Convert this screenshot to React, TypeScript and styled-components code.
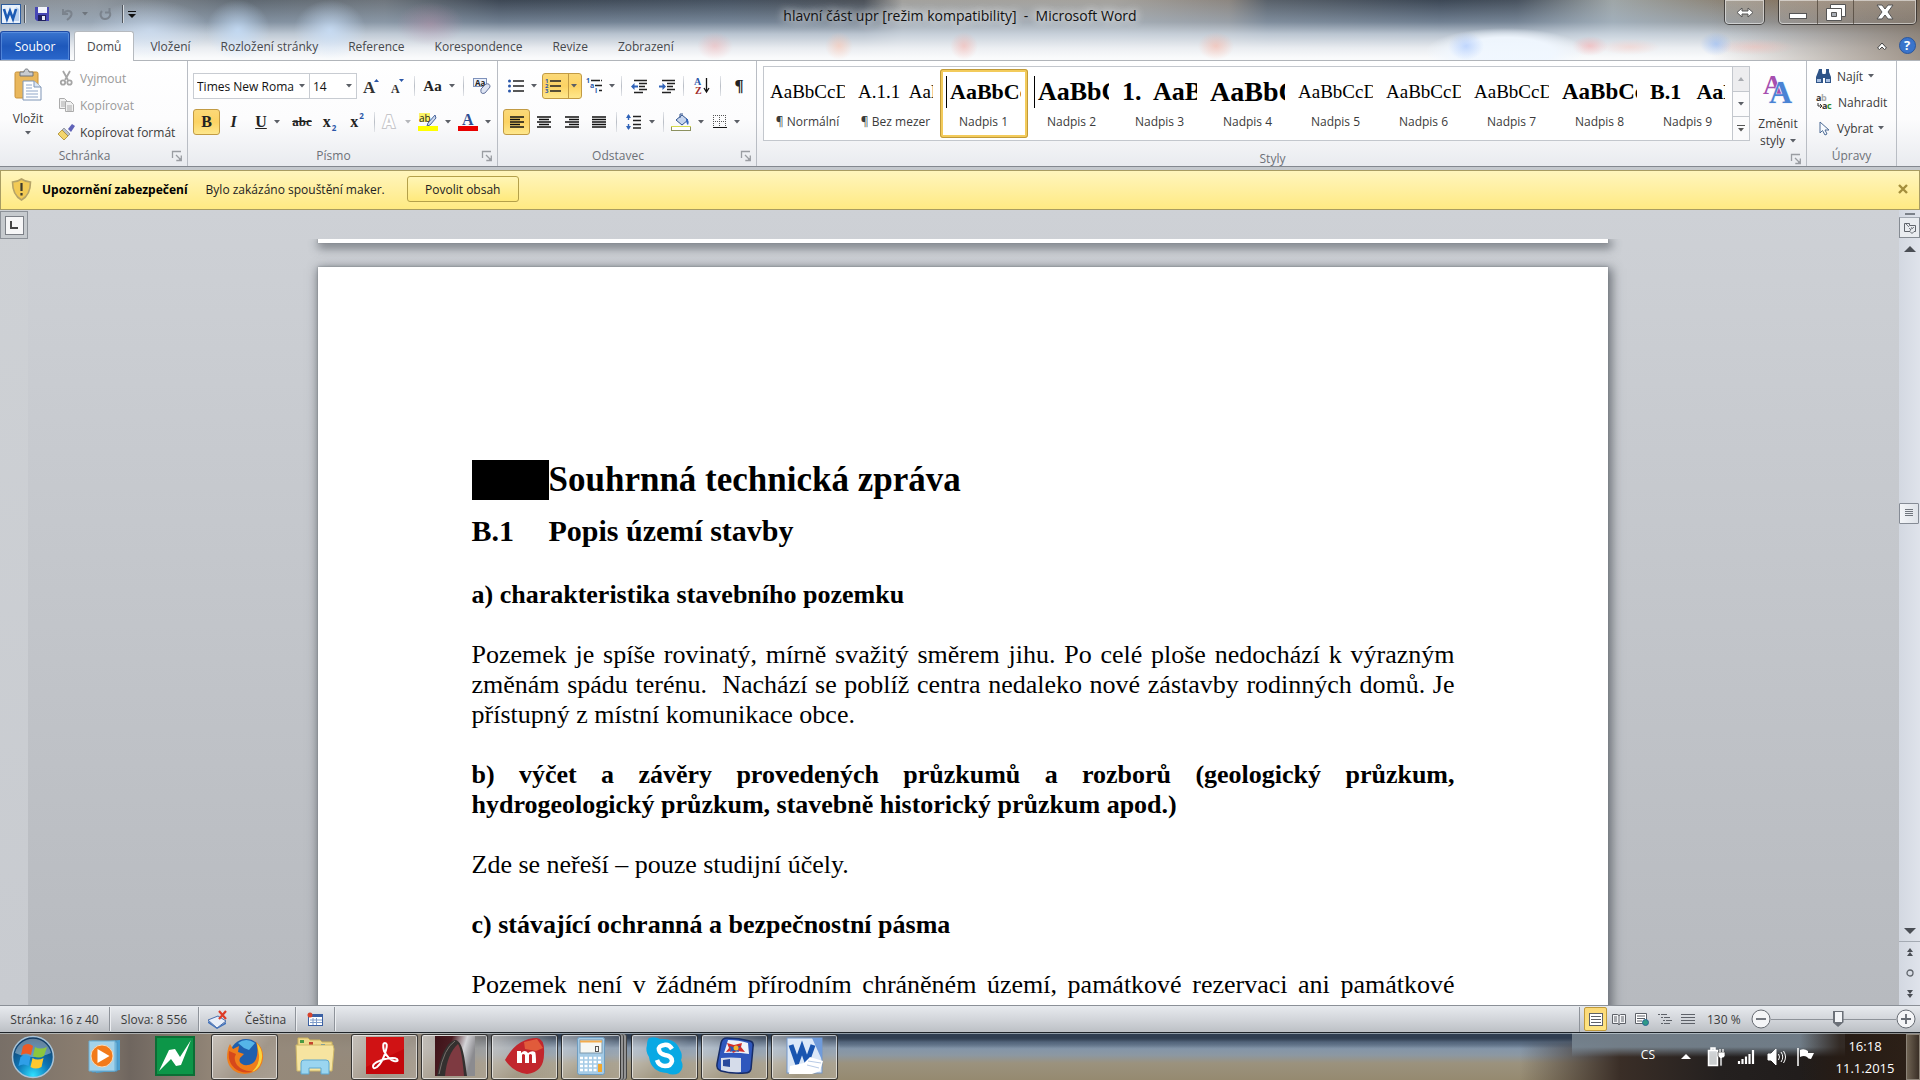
import React from "react";
import styled, { createGlobalStyle, css } from "styled-components";

const ui = `"Open Sans", "Noto Sans", sans-serif`;
const serif = `"Liberation Serif", "Times New Roman", serif`;

const GlobalStyle = createGlobalStyle`
  *, *::before, *::after { box-sizing: border-box; }
  html, body { margin: 0; height: 100%; overflow: hidden; }
  body { font-family: ${ui}; font-size: 12px; color: #3b3b3b; }
  button, select, input { font: inherit; color: inherit; }
  svg { display: block; flex: none; overflow: visible; }
`;

const Desktop = styled.div`
  display: flex;
  flex-direction: column;
  height: 100vh;
  overflow: hidden;
`;

/* ---------- glass title area ---------- */
const Glass = styled.header`
  background:
    radial-gradient(ellipse 60px 30px at 150px 30px, rgba(214, 232, 255, 0.6), transparent),
    radial-gradient(ellipse 32px 30px at 238px 30px, rgba(200, 226, 255, 0.75), transparent),
    radial-gradient(ellipse 36px 30px at 330px 30px, rgba(205, 228, 255, 0.75), transparent),
    radial-gradient(ellipse 34px 22px at 430px 24px, rgba(190, 140, 165, 0.4), transparent),
    radial-gradient(ellipse 18px 14px at 715px 46px, rgba(245, 160, 160, 0.4), transparent),
    radial-gradient(ellipse 14px 14px at 839px 46px, rgba(255, 190, 165, 0.5), transparent),
    radial-gradient(ellipse 14px 14px at 964px 46px, rgba(250, 160, 150, 0.45), transparent),
    radial-gradient(ellipse 18px 14px at 1216px 46px, rgba(250, 170, 150, 0.5), transparent),
    radial-gradient(ellipse 18px 14px at 1466px 46px, rgba(120, 165, 250, 0.4), transparent),
    radial-gradient(ellipse 80px 24px at 1505px 52px, rgba(240, 247, 255, 0.95) 60%, transparent),
    radial-gradient(ellipse 18px 10px at 1590px 46px, rgba(250, 150, 150, 0.45), transparent),
    radial-gradient(ellipse 30px 8px at 1630px 47px, rgba(250, 190, 180, 0.4), transparent),
    radial-gradient(ellipse 16px 12px at 1716px 44px, rgba(130, 175, 250, 0.5), transparent),
    radial-gradient(ellipse 40px 8px at 1755px 47px, rgba(250, 180, 170, 0.4), transparent),
    linear-gradient(90deg, transparent 89%, rgba(120, 104, 88, 0.7) 100%),
    linear-gradient(180deg, rgba(160, 182, 206, 0) 0, rgba(164, 184, 206, 0.5) 22px, rgba(205, 216, 228, 0.85) 34px, rgba(238, 241, 245, 0.97) 48px, #fafbfc 58px),
    linear-gradient(90deg, #8b9198 0, #8d949b 5%, #5f6871 13%, #6f767d 20%, #3d4754 26%, #465260 38%, #4c5158 45%, #a3a19d 47%, #a5a29d 58%, #8c8680 64%, #59616a 66%, #3c4755 75%, #48525e 79%, #9fa6a7 84%, #8b8274 90%, #8a755f 95%, #77654f 100%);
`;
const TitleBar = styled.div`
  display: grid;
  grid-template-columns: 1fr auto 1fr;
  height: 31px;
`;
const QuickAccess = styled.div`
  display: flex;
  align-items: center;
  padding: 0 0 4px 1px;
`;
const QuickButton = styled.button<{ $w: number }>`
  display: grid;
  place-items: center;
  width: ${(p) => p.$w}px;
  height: 24px;
  padding: 0;
  border: 0;
  background: none;
`;
const QuickRule = styled.span`
  width: 2px;
  height: 18px;
  margin: 0 3px;
  border-left: 1px solid #50565e;
  border-right: 1px solid #d6dade;
`;
const WindowTitle = styled.h1`
  margin: 0;
  font-size: 14px;
  line-height: 32px;
  font-weight: 400;
  color: #111;
  text-shadow: 0 0 8px #fff, 0 0 10px rgba(255, 255, 255, 0.8);
`;
const WindowControls = styled.div`
  display: flex;
  justify-content: flex-end;
  gap: 13px;
  padding-right: 3px;
`;
const ControlGroup = styled.div`
  display: flex;
  height: 25px;
  border: 1px solid rgba(45, 42, 40, 0.75);
  border-top: 0;
  border-radius: 0 0 5px 5px;
  box-shadow: inset 0 0 0 1px rgba(255, 255, 255, 0.5);
`;
const ControlButton = styled.button<{ $w: number }>`
  display: grid;
  place-items: center;
  width: ${(p) => p.$w}px;
  padding: 0;
  border: 0;
  background: linear-gradient(rgba(255, 255, 255, 0.25), rgba(255, 255, 255, 0.05));
  & + & { border-left: 1px solid rgba(60, 50, 40, 0.6); }
`;
const Tabs = styled.nav`
  display: flex;
  align-items: flex-end;
  height: 30px;
  padding-right: 4px;
  border-bottom: 1px solid #b1b5ba;
`;
const Tab = styled.button<{ $active?: boolean; $file?: boolean }>`
  height: 29px;
  padding: 2px 15px 0;
  border: 0;
  background: none;
  color: #47494d;
  line-height: 26px;
  white-space: nowrap;
  ${(p) => p.$active && css`
    padding: 0 12px;
    margin: 0 1px -1px 4px;
    height: 30px;
    border: 1px solid #b6babf;
    border-bottom: 0;
    border-radius: 3px 3px 0 0;
    background: #fff;
  `}
  ${(p) => p.$file && css`
    padding: 1px 12px 0;
    width: 70px;
    border: 1px solid #1f4ba5;
    border-bottom: 0;
    border-radius: 3px 3px 0 0;
    background: linear-gradient(#3a75cf, #1e58bb 50%, #2a67cb);
    box-shadow: inset 0 0 0 1px rgba(120, 165, 235, 0.5);
    color: #fff;
  `}
`;
const TabTools = styled.div`
  display: flex;
  align-items: center;
  gap: 6px;
  height: 29px;
  margin-left: auto;
`;

/* ---------- ribbon ---------- */
const Ribbon = styled.section`
  display: flex;
  height: 106px;
  flex: none;
  background: linear-gradient(#fff 0, #fcfcfd 55%, #e9ebef 100%);
  border-bottom: 1px solid #83888f;
`;
const RibbonEnd = styled.div`
  flex: 0 0 23px;
`;
const Group = styled.div<{ $w?: number }>`
  display: flex;
  flex-direction: column;
  ${(p) => (p.$w ? css`flex: 0 0 ${p.$w}px;` : css`flex: 1; min-width: 0;`)}
  border-right: 1px solid #b9bdc4;
`;
const GroupBody = styled.div<{ $pad?: string }>`
  display: flex;
  flex: 1;
  padding: ${(p) => p.$pad || "0"};
`;
const GroupFoot = styled.div`
  display: flex;
  align-items: center;
  height: 20px;
  color: #6d7178;
  line-height: 20px;
`;
const GroupName = styled.span`
  flex: 1;
  text-align: center;
`;
const Launcher = styled.button`
  display: grid;
  place-items: center;
  width: 16px;
  height: 16px;
  margin-right: 2px;
  padding: 0;
  border: 0;
  background: none;
`;
const BigButton = styled.button<{ $w: number }>`
  display: flex;
  flex: none;
  flex-direction: column;
  align-items: center;
  width: ${(p) => p.$w}px;
  padding: 8px 0 0;
  border: 0;
  background: none;
  line-height: 17px;
`;
const BigLabel = styled.span`
  display: block;
  margin-top: 9px;
`;
const BigRow = styled.span`
  display: flex;
  align-items: center;
  gap: 5px;
  min-height: 12px;
`;
const SmallStack = styled.div<{ $gap: number }>`
  display: flex;
  flex-direction: column;
  gap: ${(p) => p.$gap}px;
`;
const SmallButton = styled.button<{ $off?: boolean }>`
  display: flex;
  align-items: center;
  gap: 5px;
  height: 22px;
  padding: 0;
  border: 0;
  background: none;
  white-space: nowrap;
  color: ${(p) => (p.$off ? "#9a9a9a" : "#3b3b3b")};
`;
const ToolRows = styled.div`
  display: flex;
  flex-direction: column;
  gap: 10px;
`;
const ToolRow = styled.div`
  display: flex;
  align-items: center;
  height: 26px;
`;
const Tool = styled.button<{ $w: number; $on?: boolean }>`
  display: flex;
  align-items: center;
  justify-content: center;
  gap: 7px;
  width: ${(p) => p.$w}px;
  height: 26px;
  padding: 0;
  border: 1px solid transparent;
  border-radius: 3px;
  background: none;
  color: #222;
  ${(p) => p.$on && css`
    border-color: #c29b44;
    background: linear-gradient(#fbd978, #fcd364 50%, #fee78c);
  `}
`;
const SplitRight = styled.span`
  display: grid;
  place-items: center;
  width: 12px;
  height: 24px;
  border-left: 1px solid #c29b44;
`;
const ToolRule = styled.span`
  width: 1px;
  height: 20px;
  margin: 0 3px;
  background: linear-gradient(#e4e6ea, #b9bec6, #e4e6ea);
`;
const Glyph = styled.span<{ $size?: number; $bold?: boolean; $italic?: boolean; $line?: string }>`
  font-family: ${serif};
  font-size: ${(p) => p.$size || 16}px;
  line-height: 20px;
  font-weight: ${(p) => (p.$bold ? 700 : 400)};
  font-style: ${(p) => (p.$italic ? "italic" : "normal")};
  text-decoration: ${(p) => p.$line || "none"};
`;
const Mini = styled.span<{ $up?: boolean }>`
  align-self: ${(p) => (p.$up ? "flex-start" : "flex-end")};
  margin-left: -6px;
  color: #2a56a8;
  font-size: 8px;
  line-height: 12px;
  font-weight: 700;
`;
const Combo = styled.label<{ $w: number }>`
  display: flex;
  align-items: center;
  width: ${(p) => p.$w}px;
  height: 26px;
  padding: 0 4px 0 3px;
  border: 1px solid #c8ccd2;
  background: #fff;
  & + & { margin-left: -1px; }
  select {
    flex: 1;
    min-width: 0;
    margin-right: 5px;
    padding: 0;
    border: 0;
    appearance: none;
    background: none;
    color: #111;
    text-overflow: clip;
  }
`;

/* ---------- style gallery ---------- */
const Gallery = styled.div`
  display: flex;
  flex: 1;
  min-width: 0;
  height: 75px;
  border: 1px solid #c3c7cd;
  background: #fff;
`;
const GalleryItems = styled.div`
  display: grid;
  grid-template-columns: repeat(11, 1fr);
  flex: 1;
  min-width: 0;
  padding: 2px 0;
`;
const StyleCard = styled.button<{ $on?: boolean }>`
  display: flex;
  flex-direction: column;
  min-width: 0;
  padding: 0 4px 0 3px;
  border: ${(p) => (p.$on ? "3px solid #f3cb5b" : "3px solid transparent")};
  border-radius: 3px;
  outline: ${(p) => (p.$on ? "1px solid #c09a3a" : "0")};
  outline-offset: -1px;
  background: none;
`;
const Sample = styled.span<{ $size: number; $bold?: boolean; $bar?: boolean }>`
  align-self: stretch;
  height: 32px;
  margin: 4px 0 0;
  overflow: hidden;
  border-left: ${(p) => (p.$bar ? "1px solid #000" : "0")};
  padding-left: ${(p) => (p.$bar ? 3 : 0)}px;
  color: #000;
  font-family: ${serif};
  font-size: ${(p) => p.$size}px;
  line-height: 32px;
  font-weight: ${(p) => (p.$bold ? 700 : 400)};
  text-align: left;
  white-space: pre;
`;
const SampleName = styled.span`
  align-self: center;
  margin-top: 3px;
  line-height: 22px;
  white-space: nowrap;
`;
const GalleryScroll = styled.div`
  display: grid;
  grid-template-rows: repeat(3, 1fr);
  width: 17px;
  border-left: 1px solid #c3c7cd;
`;
const ScrollCell = styled.button<{ $off?: boolean }>`
  display: grid;
  place-items: center;
  padding: 0;
  border: 0;
  background: ${(p) => (p.$off ? "#ededef" : "#fbfbfc")};
  & + & { border-top: 1px solid #c3c7cd; }
`;

/* ---------- message bar ---------- */
const MessageWrap = styled.div`
  padding-top: 3px;
  flex: none;
  background: #c4c8cd;
`;
const MessageBar = styled.div`
  display: flex;
  align-items: center;
  height: 40px;
  padding: 0 11px 2px 10px;
  border: 1px solid #a89c62;
  background: linear-gradient(#fff5bd, #ffea83);
  color: #222;
`;
const MessageTitle = styled.strong`
  margin: 0 18px 0 10px;
  color: #000;
`;
const MessageButton = styled.button`
  width: 112px;
  height: 26px;
  margin: 0 auto 0 22px;
  padding: 0;
  border: 1px solid #b4a04a;
  border-radius: 3px;
  background: linear-gradient(#fff5b6, #ffe97c);
`;
const PlainButton = styled.button`
  display: grid;
  place-items: center;
  padding: 0;
  border: 0;
  background: none;
`;

/* ---------- workspace ---------- */
const Workspace = styled.main`
  display: grid;
  grid-template-columns: 28px 1fr 21px;
  flex: 1;
  min-height: 0;
  background: linear-gradient(#ced1d6, #b7babf);
`;
const VerticalRuler = styled.div`
  padding-top: 1px;
  background: linear-gradient(#ced1d5, #c8cbd0);
`;
const TabSelector = styled.button`
  display: grid;
  place-items: center;
  width: 28px;
  height: 28px;
  padding: 0;
  border: 1px solid #8d9299;
  background: #c6cace;
`;
const TabFace = styled.span`
  display: grid;
  place-items: center;
  width: 19px;
  height: 19px;
  border: 1px solid #7c8087;
  background: #f6f6f7;
`;
const DocumentColumn = styled.div`
  display: flex;
  flex-direction: column;
  min-width: 0;
  min-height: 0;
`;
const RulerSpace = styled.div`
  flex: none;
  height: 29px;
`;
const Pages = styled.div`
  flex: 1;
  min-height: 0;
  padding-right: 2px;
  overflow: hidden;
`;
const Sheet = styled.article<{ $tail?: boolean }>`
  width: 1290px;
  max-width: 90%;
  margin: 0 auto 24px;
  height: ${(p) => (p.$tail ? "4px" : "auto")};
  padding: ${(p) => (p.$tail ? "0" : "193px 153px 0 154px")};
  min-height: ${(p) => (p.$tail ? "0" : "1824px")};
  background: #fff;
  box-shadow: 0 0 2px #777c83, 2px 3px 10px 2px rgba(70, 75, 82, 0.7);
  color: #000;
  font-family: ${serif};
  font-size: 26px;
  line-height: 30px;
`;
const Numbered = styled.div`
  display: grid;
  grid-template-columns: 77px 1fr;
`;
const MainHeading = styled.h2`
  margin: 0 0 14px;
  font-size: 35px;
  line-height: 40px;
`;
const NumberHighlight = styled.span`
  background: #000;
`;
const SubHeading = styled.h3`
  margin: 0 0 32px;
  font-size: 30px;
  line-height: 34px;
`;
const Clause = styled.h4`
  margin: 0 0 30px;
  font-size: 26px;
  line-height: 30px;
  text-align: justify;
`;
const Body = styled.p<{ $continues?: boolean }>`
  margin: 0 0 30px;
  text-align: justify;
  text-align-last: ${(p) => (p.$continues ? "justify" : "auto")};
`;
const ScrollColumn = styled.div`
  display: flex;
  flex-direction: column;
  align-items: stretch;
  background: linear-gradient(90deg, #d3d8e1, #dfe3eb);
`;
const ScrollButton = styled.button<{ $h: number; $boxed?: boolean; $rule?: boolean }>`
  display: grid;
  place-items: center;
  height: ${(p) => p.$h}px;
  padding: 0;
  border: ${(p) => (p.$boxed ? "1px solid #858b93" : "0")};
  border-top: ${(p) => (p.$boxed || p.$rule ? "1px solid #a4aab3" : "0")};
  background: ${(p) => (p.$boxed ? "#e9ecf0" : "none")};
`;
const SplitHandle = styled.span`
  width: 10px;
  height: 2px;
  margin: 3px auto 2px;
  background: #7b8189;
`;
const Track = styled.div`
  display: grid;
  grid-template-rows: 242fr 21px 396fr;
  flex: 1;
`;
const Thumb = styled.span`
  display: grid;
  place-items: center;
  grid-row: 2;
  width: 20px;
  border: 1px solid #858b95;
  border-radius: 1px;
  background: linear-gradient(90deg, #f3f5f8, #dfe3e9);
`;

/* ---------- status bar ---------- */
const StatusBar = styled.footer`
  display: flex;
  align-items: center;
  flex: none;
  height: 27px;
  border-top: 1px solid #8b9097;
  background: linear-gradient(#e7eaee, #d3d6db 50%, #bcc0c5);
`;
const StatusCell = styled.span<{ $w: number }>`
  display: flex;
  align-items: center;
  justify-content: center;
  gap: 17px;
  width: ${(p) => p.$w}px;
  height: 24px;
  border-right: 1px solid #8e939a;
  box-shadow: 1px 0 0 #eceef1;
  white-space: nowrap;
`;
const ViewButtons = styled.div`
  display: flex;
  align-items: center;
  height: 25px;
  margin-left: auto;
  padding-left: 4px;
  border-left: 1px solid #8e939a;
`;
const ViewButton = styled.button<{ $on?: boolean }>`
  display: grid;
  place-items: center;
  width: 23px;
  height: 24px;
  padding: 0;
  border: 1px solid ${(p) => (p.$on ? "#c09a3a" : "transparent")};
  border-radius: 2px;
  background: ${(p) => (p.$on ? "linear-gradient(#fbd978, #fee582)" : "none")};
`;
const ZoomArea = styled.div`
  display: flex;
  align-items: center;
  padding: 0 4px 0 8px;
`;
const ZoomLabel = styled.label`
  width: 44px;
`;
const ZoomSlider = styled.input`
  width: 125px;
  height: 20px;
  margin: 0;
  appearance: none;
  background: linear-gradient(#8d9299, #8d9299) center / 100% 1px no-repeat;
  &::-webkit-slider-thumb {
    appearance: none;
    width: 11px;
    height: 16px;
    background: linear-gradient(#f2f4f7, #f2f4f7) 2px 1px / 7px 10px no-repeat, linear-gradient(#6b7078, #6b7078);
    clip-path: polygon(0 0, 100% 0, 100% 70%, 50% 100%, 0 70%);
  }
`;

/* ---------- taskbar ---------- */
const Taskbar = styled.nav`
  display: flex;
  align-items: center;
  flex: none;
  height: 48px;
  border-top: 1px solid #1e2328;
  box-shadow: inset 0 1px 0 rgba(210, 220, 225, 0.6);
  background:
    linear-gradient(90deg, transparent 1800px, rgba(40, 28, 20, 0.85) 1840px),
    linear-gradient(180deg, rgba(120, 134, 146, 0.9) 0 14px, rgba(120, 134, 146, 0) 24px) 1572px 0 / 273px 100% no-repeat,
    linear-gradient(180deg, #2f3d50 0 5px, rgba(83, 101, 123, 0.6) 9px, rgba(83, 101, 123, 0) 16px) 840px 0 / 732px 100% no-repeat,
    linear-gradient(90deg, transparent 1520px, #3a2e27 1620px, #24201f 1720px, #1f1b1a 1850px, #4a3a2a),
    linear-gradient(90deg, #786f67 0, #8b7e70 90px, #6f665f 130px, #958879 220px, rgba(150, 138, 122, 0.9) 420px, rgba(150, 140, 126, 0) 560px),
    linear-gradient(180deg, #2f3d50 0 5px, #53657b 9px, #8395a9 15px, #8c98a2 22px, #9b927e 30px, #95896f 48px);
`;
const StartButton = styled.button`
  display: grid;
  place-items: center;
  width: 44px;
  height: 46px;
  margin: 0 16px 0 11px;
  padding: 0;
  border: 0;
  background: none;
`;
const Apps = styled.div`
  display: flex;
  gap: 3px;
`;
const AppButton = styled.button<{ $open?: boolean; $stack?: boolean }>`
  display: grid;
  place-items: center;
  width: 67px;
  height: 46px;
  padding: 0 0 2px;
  border: 1px solid transparent;
  border-radius: 3px;
  background: none;
  ${(p) => p.$open && css`
    border-color: rgba(25, 25, 25, 0.8);
    background: linear-gradient(135deg, rgba(255, 255, 255, 0.5), rgba(255, 255, 255, 0.12) 60%, rgba(255, 255, 255, 0.2));
    box-shadow: inset 0 0 0 1px rgba(255, 255, 255, 0.6);
  `}
  ${(p) => p.$stack && css`
    width: 60px;
    margin-right: 7px;
    box-shadow: inset 0 0 0 1px rgba(255, 255, 255, 0.6), 2px 0 0 rgba(225, 225, 225, 0.5), 3px 0 0 #444, 5px 0 0 rgba(225, 225, 225, 0.5), 6px 0 0 #444;
  `}
`;
const Tray = styled.div`
  display: flex;
  align-items: center;
  gap: 8px;
  height: 46px;
  margin-left: auto;
  color: #fff;
`;
const Language = styled.span`
  margin: 0 12px 4px 0;
`;
const TrayButton = styled.button`
  display: grid;
  place-items: center;
  width: 22px;
  height: 24px;
  padding: 0;
  border: 0;
  background: none;
`;
const Clock = styled.time`
  width: 76px;
  margin-left: 2px;
  font-size: 13px;
  line-height: 22px;
  text-align: center;
`;
const ShowDesktop = styled.button`
  width: 14px;
  height: 46px;
  margin-left: -5px;
  padding: 0;
  border: 1px solid #8d8478;
  background: linear-gradient(90deg, #6f6353, #3a2f26);
`;

/* ---------- drawings ---------- */
const Down = ({ c = "#5b5f66" }: { c?: string }) => (
  <svg width="6" height="4" viewBox="0 0 6 4"><path d="M0 0h6L3 3.6z" fill={c} /></svg>
);
const LauncherIcon = () => (
  <svg width="10" height="10" viewBox="0 0 10 10" fill="none" stroke="#9a9da2">
    <path d="M.5 7V.5H9M4 4l5 5M9.300 4.500v5h-5M7 9h2V7" strokeWidth="1.300" />
  </svg>
);
const WordMini = () => (
  <svg width="20" height="20" viewBox="0 0 20 20">
    <rect x=".5" y=".5" width="19" height="19" fill="#e9f1fb" stroke="#2d5c9e" />
    <path d="M15 3l3 2v12h-5z" fill="#b9d0ee" />
    <path d="M3 5l3 10 3-8 3 8 3-10" fill="none" stroke="#1d5bb4" strokeWidth="2.600" />
  </svg>
);
const SaveIcon = () => (
  <svg width="14" height="14" viewBox="0 0 14 14">
    <path d="M0 0h14v14H2l-2-2z" fill="#4747b5" />
    <rect x="3" width="9" height="6" fill="#f2f4fb" /><rect x="3" y="8" width="8" height="6" fill="#20205e" /><rect x="7" y="9" width="3" height="4" fill="#e7e9f6" />
  </svg>
);
const UndoIcon = () => (
  <svg width="13" height="13" viewBox="0 0 13 13" fill="none" stroke="#7b838d" strokeWidth="2">
    <path d="M2 1v5h5M2.500 5.500C6 1 11 3 10.500 6.500 10 9 8 10.500 6 12" />
  </svg>
);
const RedoIcon = () => (
  <svg width="13" height="13" viewBox="0 0 13 13" fill="none" stroke="#7b838d" strokeWidth="2">
    <path d="M3 3C0 6 2 11 6 11s7-4 4-8M6 4.500h4.500V0" />
  </svg>
);
const PasteIcon = () => (
  <svg width="28" height="32" viewBox="0 0 28 32">
    <rect x="1" y="3" width="23" height="26" rx="1.500" fill="#e9b75c" stroke="#c8923a" />
    <path d="M6 3h4c0-4 5-4 5 0h4v4H6z" fill="#c9ccd0" stroke="#70757b" />
    <path d="M9 12h11l7 6v13H9z" fill="#fdfeff" stroke="#7f95b5" />
    <path d="M20 12v6h7" fill="#dbe6f4" stroke="#7f95b5" />
    <path d="M12 16h6M12 19h6M12 22h12M12 25h12M12 28h12" stroke="#8fa6c8" />
  </svg>
);
const CutIcon = () => (
  <svg width="17" height="16" viewBox="0 0 17 16" fill="none" stroke="#a5a5a5" strokeWidth="1.800">
    <path d="M5 1l5 9M12 1L7 10" /><circle cx="5" cy="12.500" r="2.200" /><circle cx="11.500" cy="12.500" r="2.200" />
  </svg>
);
const CopyIcon = () => (
  <svg width="17" height="16" viewBox="0 0 17 16" fill="#f1f1f1" stroke="#ababab">
    <path d="M1.500 1.500h5l3 3v7h-8zM3 5h4M3 7h4M3 9h4" /><path d="M7.500 4.500h5l3 3v7h-8zM9 9h5M9 11h5M9 13h5" />
  </svg>
);
const BrushIcon = () => (
  <svg width="17" height="16" viewBox="0 0 17 16">
    <path d="M10 5l4-5 3 2-4 6z" fill="#5f62b8" /><path d="M6 4l6 6-2 2-6-6z" fill="#b9bfca" stroke="#6d7280" strokeWidth=".6" />
    <path d="M4 6l6 6-4 4-6-6z" fill="#f3d56c" stroke="#a98a2e" strokeWidth=".8" />
  </svg>
);
const EraserIcon = () => (
  <svg width="18" height="17" viewBox="0 0 18 17">
    <rect x=".5" y=".5" width="13" height="8" fill="#eaf0fb" stroke="#7f92bb" />
    <text x="2" y="7.500" fontSize="8" fontFamily="Open Sans" fontWeight="700" fill="#222">Aa</text>
    <path d="M8 11l5-5q4-1 4 3l-5 6q-5 2-4-4z" fill="#dde4f3" stroke="#64739c" />
  </svg>
);
const GrowA = ({ small }: { small?: boolean }) => (
  <svg width="16" height="17" viewBox="0 0 16 17">
    <text x={small ? 1 : 0} y="15" fontSize={small ? 12 : 17} fontFamily="Liberation Serif" fontWeight="700" fill="#333">A</text>
    <path d={small ? "M9 1h5l-2.500 3z" : "M11 4h5l-2.500-3z"} fill="#2a56a8" />
  </svg>
);
const EffectsA = () => (
  <svg width="17" height="18" viewBox="0 0 17 18"><text x="2" y="15" fontSize="17" fontFamily="Open Sans" fontWeight="700" fill="#fff" stroke="#c6c6ca" strokeWidth="2" paintOrder="stroke">A</text></svg>
);
const HighlightIcon = () => (
  <svg width="20" height="18" viewBox="0 0 20 18">
    <rect x="1" width="11" height="9" fill="#fbf267" /><text x="1" y="9" fontSize="10" fontFamily="Open Sans" fill="#222">ab</text>
    <path d="M17 2L10 10l-1 3 3-1 6-7z" fill="#cdd9ee" stroke="#49659c" /><rect y="13" width="20" height="5" fill="#ff0" />
  </svg>
);
const FontColor = () => (
  <svg width="20" height="18" viewBox="0 0 20 18">
    <text x="4" y="12" fontSize="16" fontFamily="Liberation Serif" fontWeight="700" fill="#2f4f93">A</text><rect y="13" width="20" height="5" fill="#e80000" />
  </svg>
);
const ListIcon = ({ kind }: { kind: "dot" | "num" | "multi" }) => (
  <svg width="16" height="16" viewBox="0 0 16 16">
    {kind === "multi" ? (
      <><path d="M5 2.500h11M9 7.500h7M13 12.500h3" stroke="#222" strokeWidth="1.400" strokeDasharray="9 1" />
        <g fontSize="7" fontFamily="Open Sans" fontWeight="700" fill="#2a56a8"><text x="0" y="5">1</text><text x="4" y="10">a</text><text x="9" y="15">i</text></g></>
    ) : (
      <><path d="M5 3h11M5 8h11M5 13h11" stroke="#222" strokeWidth="1.400" />
        {kind === "dot" ? <g fill="#2a56a8"><circle cx="1.500" cy="3" r="1.500" /><circle cx="1.500" cy="8" r="1.500" /><circle cx="1.500" cy="13" r="1.500" /></g>
          : <g fontSize="6" fontFamily="Open Sans" fontWeight="700" fill="#2a56a8"><text x="0" y="5">1</text><text x="0" y="10">2</text><text x="0" y="15">3</text></g>}</>
    )}
  </svg>
);
const IndentIcon = ({ right }: { right?: boolean }) => (
  <svg width="16" height="15" viewBox="0 0 16 15">
    <path d="M3 1.500h13M8 4.500h8M8 7.500h6M8 10.500h8M3 13.500h9" stroke="#222" strokeWidth="1.400" />
    <path d={right ? "M7 7.500L3.500 4v2.500H0v2h3.500V11z" : "M0 7.500L3.500 4v2.500H7v2H3.500V11z"} fill="#2f62b8" />
  </svg>
);
const SortIcon = () => (
  <svg width="16" height="18" viewBox="0 0 16 18">
    <g fontSize="10" fontFamily="Liberation Serif" fontWeight="700"><text x="0" y="8" fill="#2a56a8">A</text><text x="1" y="17" fill="#a12b2b">Z</text></g>
    <path d="M12.500 1v13M10 11l2.500 4 2.500-4" fill="none" stroke="#111" strokeWidth="1.300" />
  </svg>
);
const AlignIcon = ({ kind, c = "#111" }: { kind: "l" | "c" | "r" | "j"; c?: string }) => {
  const short = { l: "M0 %h10", c: "M2 %h10", r: "M4 %h10", j: "M0 %h14" }[kind];
  const d = [0, 1, 2, 3, 4].map((i) => (i % 2 ? short.replace("%", String(i * 2.5 + 1)) : `M0 ${i * 2.5 + 1}h14`)).join("");
  return <svg width="14" height="13" viewBox="0 0 14 13"><path d={d} stroke={c} strokeWidth="1.300" /></svg>;
};
const SpacingIcon = () => (
  <svg width="16" height="16" viewBox="0 0 16 16">
    <path d="M7 2.500h8M7 6.500h8M7 10.500h8M7 14h8" stroke="#222" strokeWidth="1.400" />
    <path d="M2.500 1v14" stroke="#2f62b8" strokeDasharray="5 4" strokeWidth="1.400" /><path d="M0 4l2.500-4L5 4zM0 12l2.500 4L5 12z" fill="#2f62b8" />
  </svg>
);
const BucketIcon = () => (
  <svg width="20" height="18" viewBox="0 0 20 18">
    <path d="M5 7l6-5 6 5-6 5z" fill="#c6d5ee" stroke="#33558f" /><path d="M9 5V1h3" fill="none" stroke="#33558f" /><path d="M15 5q4 3 2 7-2-1-2-7z" fill="#3668be" />
    <rect x=".5" y="13.500" width="19" height="4" fill="#fff" stroke="#8c9160" /><path d="M0 13.500h20" stroke="#d6dc4e" />
  </svg>
);
const BordersIcon = () => (
  <svg width="14" height="14" viewBox="0 0 14 14" fill="none" stroke="#555"><path d="M.5 0v14M6.500 0v14M12.500 0v14M0 .5h14M0 6.500h14" strokeDasharray="1 1" /><path d="M0 12.500h14" stroke="#111" /></svg>
);
const ChangeStyles = () => (
  <svg width="30" height="32" viewBox="0 0 30 32">
    <text x="0" y="20" fontSize="27" fontFamily="Liberation Serif" fontWeight="700" fill="#a64fb0">A</text>
    <text x="6" y="29" fontSize="32" fontFamily="Liberation Serif" fontWeight="700" fill="#4a83d4" stroke="#e8effa" strokeWidth="1" paintOrder="stroke">A</text>
  </svg>
);
const FindIcon = () => (
  <svg width="16" height="14" viewBox="0 0 16 14" fill="#2f5488"><path d="M3 0h3v3l1 4v7H0V8l2-5zM10 0h3v3l2 5v6H9V7l1-4zM6 5h4v4H6z" /><path d="M1 10h4v3H1zM10 10h4v3h-4z" fill="#a9c0e2" /></svg>
);
const ReplaceIcon = () => (
  <svg width="17" height="16" viewBox="0 0 17 16" fontFamily="Open Sans" fontWeight="700" fontSize="9">
    <text x="0" y="7" fill="#333">a</text><text x="5" y="7" fill="#a9a9a9">b</text><text x="6" y="15" fill="#333">a</text><text x="11" y="15" fill="#2a8a2a">c</text>
    <path d="M2 9v3h3M4 10l2 2-2 2" fill="none" stroke="#333" />
  </svg>
);
const CursorIcon = () => (
  <svg width="16" height="15" viewBox="0 0 16 15"><path d="M4 1v11l2.500-2.500L9 14l2-1-2-4h4z" fill="#f8fbff" stroke="#4c6a94" /></svg>
);
const ShieldIcon = () => (
  <svg width="21" height="23" viewBox="0 0 21 23"><path d="M10.500 1q4 3 9 3 0 13-9 18-9-5-9-18 5 0 9-3z" fill="#f2ca55" stroke="#b5a368" strokeWidth="1.600" /><path d="M10.500 5v8M10.500 15v2.500" stroke="#3d3a2e" strokeWidth="2.200" /></svg>
);
const CloseX = ({ c, s = 10 }: { c: string; s?: number }) => (
  <svg width={s} height={s} viewBox="0 0 10 10"><path d="M1 1l8 8M9 1L1 9" stroke={c} strokeWidth="2.400" /></svg>
);
const ReadView = ({ kind }: { kind: number }) => (
  <svg width="14" height="13" viewBox="0 0 14 13" fill="none" stroke="#5d6168">
    {kind === 0 && <><rect x=".5" y=".5" width="13" height="12" fill="#fff" /><path d="M2 3.500h10M2 6.500h10M2 9.500h10" /></>}
    {kind === 1 && <><path d="M.5 1.500h5l1.500 1 1.500-1h5v9H8L7 12l-1-1.500H.5zM7 2v10" fill="#f3f4f6" /><path d="M2 4h3M2 6h3M2 8h3M9 4h3M9 6h3M9 8h3" /></>}
    {kind === 2 && <><path d="M.5.500h11v10H.5z" fill="#fff" /><path d="M2 3h8M2 5.500h8M2 8h5" /><circle cx="10.500" cy="9.500" r="3" fill="#2e9a86" stroke="#2a6594" /></>}
    {kind === 3 && <path d="M0 1.500h2M3 1.500h6M3 4.500h2M6 4.500h6M5 7.500h2M8 7.500h6M3 10.500h2M6 10.500h6" />}
    {kind === 4 && <path d="M0 1.500h14M0 4.500h14M0 7.500h14M0 10.500h14" strokeWidth="1.200" />}
  </svg>
);
const ZoomRound = ({ plus }: { plus?: boolean }) => (
  <svg width="20" height="20" viewBox="0 0 20 20" fill="none" stroke="#666b72"><circle cx="10" cy="10" r="9" fill="#f4f5f7" /><path d={plus ? "M5 10h10M10 5v10" : "M5 10h10"} strokeWidth="1.800" /></svg>
);
const ProofIcon = () => (
  <svg width="20" height="19" viewBox="0 0 20 19"><path d="M0 10l10-4 8 5-9 7z" fill="#e8eef8" stroke="#496fae" /><path d="M0 11l9 7 9-6v2l-9 5-9-6z" fill="#3f70bb" /><path d="M11 1l7 8M18 1l-7 8" stroke="#dd3b26" strokeWidth="2.200" /></svg>
);
const MacroIcon = () => (
  <svg width="16" height="14" viewBox="0 0 16 14"><rect x="1.500" y="2.500" width="14" height="11" fill="#fff" stroke="#3b60a3" /><path d="M2 4h13" stroke="#3b60a3" strokeWidth="2" /><path d="M3 8h12M3 10.500h12M6 6v7M9.500 6v7" stroke="#7f9cca" /><circle cx="3" cy="3" r="2.500" fill="#d8432c" /></svg>
);

const StartOrb = () => (
  <svg width="44" height="44" viewBox="0 0 44 44">
    <defs><radialGradient id="orb" cx=".5" cy=".95" r=".9"><stop offset="0" stopColor="#2fe0ff" /><stop offset=".45" stopColor="#0e76b6" /><stop offset="1" stopColor="#123a62" /></radialGradient></defs>
    <circle cx="22" cy="22" r="20.500" fill="url(#orb)" stroke="#a9c4d8" strokeWidth="1.500" />
    <path d="M4 18a18.500 18.500 0 0 1 36 0q-18 8-36 0z" fill="#fff" opacity=".35" />
    <path d="M12 11q5-4 10 0l-2 9q-5-3-10 0z" fill="#ee5a24" /><path d="M24 12q5 3 12 0l-3 9q-5 3-11 0z" fill="#8cc63f" />
    <path d="M9.500 22q5-4 10 0l-2 9q-5-3-10 0z" fill="#2f9fe8" /><path d="M21.500 23q5 3 11 0l-2 9q-6 3-11 0z" fill="#fdc82f" />
  </svg>
);
const apps: { name: string; open?: boolean; stack?: boolean; icon: React.ReactNode }[] = [
  { name: "Windows Media Player", icon: <svg width="34" height="36" viewBox="0 0 34 36"><path d="M8 4l24-2v30l-24 3z" fill="#4d9fd0" /><path d="M4 3l25 1v29l-25 1z" fill="#7cc0e4" stroke="#4a94c2" /><path d="M1 3h26v30H1z" fill="#a3d2ea" stroke="#6badd2" /><circle cx="14" cy="18" r="11" fill="#f27a1a" stroke="#f9d9b5" /><path d="M9.500 11v14l12-7z" fill="#fff" /></svg> },
  { name: "Blesk", icon: <svg width="40" height="40" viewBox="0 0 40 40"><rect x="1" y="1" width="38" height="38" fill="#0c9648" stroke="#0b6e35" strokeWidth="2" /><path d="M36 4L26 29l-5 1-5-7L4 35 14 14l6-1 5 8z" fill="#fff" /></svg> },
  { name: "Firefox", open: true, icon: <svg width="38" height="38" viewBox="0 0 38 38"><circle cx="20" cy="18" r="16" fill="#1f5fae" /><path d="M12 6q8-6 17 0l-6 7-5-2z" fill="#55b5e8" /><path d="M30 5q8 6 7 17-2 14-18 15Q3 36 1 21 1 12 4 7l3 5 6-3-1 6 6 2-4 4q-2 5 4 7 9 1 12-6 3-8 0-17z" fill="#ef7d1b" /><path d="M31 6q6 7 5 15-1 10-10 14 8-8 7-17z" fill="#fbd33c" /><path d="M3 14q-2 14 10 20 8 3 14 0-10 1-16-6-4-6-1-11z" fill="#d6481b" /></svg> },
  { name: "Průzkumník", icon: <svg width="40" height="38" viewBox="0 0 40 38"><path d="M3 1h10l2 2h10l2 2h10v10H3z" fill="#efd98c" stroke="#cbb25f" /><rect x="5" y="3" width="4" height="3" fill="#4a9a42" /><rect x="14" y="5" width="4" height="3" fill="#c4432f" /><rect x="26" y="7" width="4" height="3" fill="#3d86c2" /><path d="M1 8h37l1 4-2 22H2z" fill="#f6e4a0" stroke="#cfb868" /><path d="M6 37V26q0-3 3-3h22q3 0 3 3v11h-8v-6H14v6z" fill="#9ad5f0" stroke="#5fa8d0" /></svg> },
  { name: "Adobe Reader", open: true, icon: <svg width="38" height="37" viewBox="0 0 38 37"><rect width="38" height="37" fill="#c4070b" /><path d="M0 0h38v12L0 30z" fill="#d91a1a" opacity=".6" /><path d="M7 29q1-4 12-7 9-2 12 0 2 3-3 2-6-2-10-10-2-8 1-8t1 7q-3 12-9 17-4 3-4-1z" fill="none" stroke="#fff" strokeWidth="2" /></svg> },
  { name: "ArchiCAD", open: true, icon: <svg width="40" height="40" viewBox="0 0 40 40"><defs><linearGradient id="ac" y2=".3"><stop offset="0" stopColor="#3d1218" /><stop offset=".4" stopColor="#4a1c22" /><stop offset=".75" stopColor="#d4d4d8" /><stop offset="1" stopColor="#8b8b8f" /></linearGradient></defs><rect width="40" height="40" fill="url(#ac)" /><path d="M2 40Q7 8 20 4q7 0 10 22l2 14z" fill="#34302f" /><path d="M10 40Q12 18 23 8q4 6 6 32z" fill="#7e3a41" /><path d="M4 38Q9 12 20 5" fill="none" stroke="#77706c" /></svg> },
  { name: "Miro", open: true, icon: <svg width="42" height="38" viewBox="0 0 42 38"><path d="M1 23Q13 1 33 1q8 1 7 16 0 18-17 20Q9 35 1 23z" fill="#c2262d" /><path d="M20 5l13-3 6 9-7 3-11-2z" fill="#e8693f" opacity=".8" /><path d="M13 26V14h4v2q4-4 7 0 4-3 7-1 1 1 1 11h-4v-8q-2-2-3 0v8h-4v-8q-2-2-3 0v8z" fill="#fff" /></svg> },
  { name: "Kalkulačka", open: true, stack: true, icon: <svg width="28" height="38" viewBox="0 0 28 38"><rect x=".5" y=".5" width="27" height="37" rx="2" fill="#a5cbe6" stroke="#6d9cc0" /><rect x="3" y="3" width="22" height="13" fill="#f5f7f4" stroke="#7d98ab" /><path d="M3 4.500h22" stroke="#f3ac4e" strokeWidth="2" /><rect x="18.500" y="9.500" width="3" height="5" fill="none" stroke="#555" /><path d="M3 21h22M3 25h22M3 29h17M3 33h17" stroke="#fff" strokeWidth="2.400" strokeDasharray="3 1.500" /><rect x="21" y="27" width="4" height="8" fill="#f2a72e" /></svg> },
  { name: "Skype", open: true, icon: <svg width="38" height="38" viewBox="0 0 38 38"><path d="M3 1q6-2 11 1 16-1 20 11 3 5 1 10 4 8-2 13-6 3-12 0Q5 35 3 20-1 14 1 8q0-5 2-7z" fill="#08a9e4" /><path d="M26 12q-3-5-8-4-6 1-5 5 1 4 6 5 7 1 7 6-1 5-7 5-6 0-8-6" fill="none" stroke="#fff" strokeWidth="4.500" /></svg> },
  { name: "Správce souborů", open: true, icon: <svg width="38" height="38" viewBox="0 0 38 38"><path d="M11 1q12 0 23 3 4 1 3 6l-2 22q-1 4-6 4-12 1-24-2-5-2-4-7L5 6q1-5 6-5z" fill="#2f57bd" stroke="#172c66" strokeWidth="1.500" /><path d="M12 3q11 0 20 3l1 11q-12-2-25-1z" fill="#eef2f8" /><path d="M11 6l7 2 8-2-1 4 4 5-8-1-4 2-1-2-6 1 3-4z" fill="#d22e2a" /><path d="M13 9l5 1 7-1-3 3 1 3-5-1-4 1 1-3z" fill="#2b58b0" /><circle cx="20" cy="11" r="2.500" fill="#f3b52c" /><path d="M5 21q10-1 20 0v14q-10 1-20-2z" fill="#d5dcea" /><path d="M7 23l7-1v8l-7-1z" fill="#28489b" /></svg> },
  { name: "Microsoft Word", open: true, icon: <svg width="38" height="38" viewBox="0 0 38 38"><rect x="1" y="1" width="35" height="35" fill="#dbe8f8" stroke="#7296c9" /><path d="M26 1h10v22z" fill="#6f9bdb" /><path d="M5 8l6 17 5-14 5 14 6-17" fill="none" stroke="#1955b0" strokeWidth="5" /><path d="M4 29l14-3 6-6 13 4-3 10-8 3H3z" fill="#fff" /><path d="M22 24l13 2M21 28l12 3" stroke="#b8cbe6" /></svg> },
];

const samples: { name: string; text: string; size: number; bold?: boolean; bar?: boolean }[] = [
  { name: "¶ Normální", text: "AaBbCcDd", size: 19 },
  { name: "¶ Bez mezer", text: "A.1.1  AaBb", size: 19 },
  { name: "Nadpis 1", text: "AaBbCc", size: 22, bold: true, bar: true },
  { name: "Nadpis 2", text: "AaBbCc", size: 26, bold: true, bar: true },
  { name: "Nadpis 3", text: "1.  AaBb", size: 26, bold: true },
  { name: "Nadpis 4", text: "AaBbCc", size: 28, bold: true },
  { name: "Nadpis 5", text: "AaBbCcDd", size: 19 },
  { name: "Nadpis 6", text: "AaBbCcDd", size: 19 },
  { name: "Nadpis 7", text: "AaBbCcDd", size: 19 },
  { name: "Nadpis 8", text: "AaBbCc", size: 23, bold: true },
  { name: "Nadpis 9", text: "B.1   AaBb", size: 22, bold: true },
];
const tabs = ["Vložení", "Rozložení stránky", "Reference", "Korespondence", "Revize", "Zobrazení"];

const Foot = ({ label, launcher = true }: { label: string; launcher?: boolean }) => (
  <GroupFoot><GroupName>{label}</GroupName>{launcher && <Launcher aria-label={`${label} – další`}><LauncherIcon /></Launcher>}</GroupFoot>
);

export default function App() {
  return (
    <Desktop>
      <GlobalStyle />
      <Glass>
        <TitleBar>
          <QuickAccess>
            <QuickButton $w={20} aria-label="Word"><WordMini /></QuickButton>
            <QuickRule />
            <QuickButton $w={26} aria-label="Uložit"><SaveIcon /></QuickButton>
            <QuickButton $w={24} aria-label="Zpět"><UndoIcon /></QuickButton>
            <QuickButton $w={12} aria-label="Historie"><Down c="#6e757d" /></QuickButton>
            <QuickButton $w={28} aria-label="Znovu"><RedoIcon /></QuickButton>
            <QuickRule />
            <QuickButton $w={10} aria-label="Přizpůsobit">
              <svg width="8" height="7" viewBox="0 0 8 7"><path d="M0 .5h8" stroke="#111" /><path d="M0 3h8L4 7z" fill="#111" /></svg>
            </QuickButton>
          </QuickAccess>
          <WindowTitle>hlavní část upr [režim kompatibility]&nbsp; -&nbsp; Microsoft Word</WindowTitle>
          <WindowControls>
            <ControlGroup>
              <ControlButton $w={39} aria-label="Přepnout">
                <svg width="16" height="11" viewBox="0 0 16 11"><path d="M0 5.500L5 1v3h6V1l5 4.500L11 10V7H5v3z" fill="#fff" stroke="#555" /></svg>
              </ControlButton>
            </ControlGroup>
            <ControlGroup>
              <ControlButton $w={38} aria-label="Minimalizovat">
                <svg width="18" height="14" viewBox="0 0 18 14"><rect x=".5" y="8.500" width="17" height="5" fill="#fff" stroke="#555" /></svg>
              </ControlButton>
              <ControlButton $w={36} aria-label="Obnovit">
                <svg width="20" height="17" viewBox="0 0 20 17"><path d="M4.500.500h15v12h-15z" fill="#fff" stroke="#555" /><path d="M.5 4.500h15v12H.5z" fill="#fff" stroke="#555" /><path d="M5.500 8.500h5v4h-5z" fill="#a9aeb5" stroke="#555" /></svg>
              </ControlButton>
              <ControlButton $w={63} aria-label="Zavřít">
                <svg width="18" height="16" viewBox="0 0 18 16"><path d="M1 1h5l3 4 3-4h5l-5 7 5 7h-5l-3-4-3 4H1l5-7z" fill="#fff" stroke="#555" /></svg>
              </ControlButton>
            </ControlGroup>
          </WindowControls>
        </TitleBar>
        <Tabs>
          <Tab $file>Soubor</Tab>
          <Tab $active>Domů</Tab>
          {tabs.map((t) => <Tab key={t}>{t}</Tab>)}
          <TabTools>
            <PlainButton aria-label="Sbalit pás karet"><svg width="22" height="10" viewBox="0 0 22 10"><path d="M6.500 7L11 2l4.500 5-2 1.500L11 6 8.500 8.500z" fill="#fff" stroke="#444" /></svg></PlainButton>
            <PlainButton aria-label="Nápověda"><svg width="17" height="17" viewBox="0 0 17 17"><circle cx="8.500" cy="8.500" r="8" fill="#3a74cb" stroke="#2a569d" /><text x="5" y="13" fontSize="13" fontFamily="Open Sans" fontWeight="700" fill="#fff">?</text></svg></PlainButton>
          </TabTools>
        </Tabs>
      </Glass>

      <Ribbon>
        <Group $w={188}>
          <GroupBody>
            <BigButton $w={56}><PasteIcon /><BigLabel>Vložit</BigLabel><BigRow><Down /></BigRow></BigButton>
            <GroupBody $pad="6px 0 0 2px">
              <SmallStack $gap={5}>
                <SmallButton $off><CutIcon />Vyjmout</SmallButton>
                <SmallButton $off><CopyIcon />Kopírovat</SmallButton>
                <SmallButton><BrushIcon />Kopírovat formát</SmallButton>
              </SmallStack>
            </GroupBody>
          </GroupBody>
          <Foot label="Schránka" />
        </Group>

        <Group $w={309}>
          <GroupBody $pad="12px 0 0 5px">
            <ToolRows>
              <ToolRow>
                <Combo $w={117}><select aria-label="Písmo"><option>Times New Roman</option></select><Down /></Combo>
                <Combo $w={48}><select aria-label="Velikost písma"><option>14</option></select><Down /></Combo>
                <Tool $w={27} aria-label="Zvětšit písmo"><GrowA /></Tool>
                <Tool $w={27} aria-label="Zmenšit písmo"><GrowA small /></Tool>
                <ToolRule />
                <Tool $w={42}><Glyph $bold $size={15}>Aa</Glyph><Down /></Tool>
                <ToolRule />
                <Tool $w={30} aria-label="Vymazat formátování"><EraserIcon /></Tool>
              </ToolRow>
              <ToolRow>
                <Tool $w={27} $on><Glyph $bold>B</Glyph></Tool>
                <Tool $w={27}><Glyph $bold $italic>I</Glyph></Tool>
                <Tool $w={41}><Glyph $bold $line="underline">U</Glyph><Down /></Tool>
                <Tool $w={28}><Glyph $size={13} $bold $line="line-through">abc</Glyph></Tool>
                <Tool $w={27}><Glyph $bold>x</Glyph><Mini>2</Mini></Tool>
                <Tool $w={28}><Glyph $bold>x</Glyph><Mini $up>2</Mini></Tool>
                <ToolRule />
                <Tool $w={36} aria-label="Textové efekty"><EffectsA /><Down c="#b5b7bb" /></Tool>
                <Tool $w={40} aria-label="Zvýraznění"><HighlightIcon /><Down /></Tool>
                <Tool $w={40} aria-label="Barva písma"><FontColor /><Down /></Tool>
              </ToolRow>
            </ToolRows>
          </GroupBody>
          <Foot label="Písmo" />
        </Group>

        <Group $w={259}>
          <GroupBody $pad="12px 0 0 5px">
            <ToolRows>
              <ToolRow>
                <Tool $w={39} aria-label="Odrážky"><ListIcon kind="dot" /><Down /></Tool>
                <Tool $w={40} $on aria-label="Číslování"><ListIcon kind="num" /><SplitRight><Down /></SplitRight></Tool>
                <Tool $w={36} aria-label="Víceúrovňový seznam"><ListIcon kind="multi" /><Down /></Tool>
                <ToolRule />
                <Tool $w={28} aria-label="Zmenšit odsazení"><IndentIcon /></Tool>
                <Tool $w={27} aria-label="Zvětšit odsazení"><IndentIcon right /></Tool>
                <ToolRule />
                <Tool $w={30} aria-label="Seřadit"><SortIcon /></Tool>
                <ToolRule />
                <Tool $w={30}><Glyph $bold $size={17}>¶</Glyph></Tool>
              </ToolRow>
              <ToolRow>
                <Tool $w={27} $on aria-label="Vlevo"><AlignIcon kind="l" /></Tool>
                <Tool $w={28} aria-label="Na střed"><AlignIcon kind="c" /></Tool>
                <Tool $w={27} aria-label="Vpravo"><AlignIcon kind="r" /></Tool>
                <Tool $w={28} aria-label="Do bloku"><AlignIcon kind="j" /></Tool>
                <ToolRule />
                <Tool $w={40} aria-label="Řádkování"><SpacingIcon /><Down /></Tool>
                <ToolRule />
                <Tool $w={40} aria-label="Stínování"><BucketIcon /><Down /></Tool>
                <Tool $w={38} aria-label="Ohraničení"><BordersIcon /><Down /></Tool>
              </ToolRow>
            </ToolRows>
          </GroupBody>
          <Foot label="Odstavec" />
        </Group>

        <Group>
          <GroupBody $pad="5px 0 0 6px">
            <Gallery>
              <GalleryItems>
                {samples.map((s) => (
                  <StyleCard key={s.name} $on={s.name === "Nadpis 1"}>
                    <Sample $size={s.size} $bold={s.bold} $bar={s.bar}>{s.text}</Sample>
                    <SampleName>{s.name}</SampleName>
                  </StyleCard>
                ))}
              </GalleryItems>
              <GalleryScroll>
                <ScrollCell $off aria-label="Předchozí řádek"><svg width="6" height="4" viewBox="0 0 6 4"><path d="M0 4h6L3 0z" fill="#a8abb0" /></svg></ScrollCell>
                <ScrollCell aria-label="Další řádek"><Down /></ScrollCell>
                <ScrollCell aria-label="Více"><svg width="8" height="7" viewBox="0 0 8 7"><path d="M0 .5h8" stroke="#555" /><path d="M1 3h6L4 6.500z" fill="#555" /></svg></ScrollCell>
              </GalleryScroll>
            </Gallery>
            <BigButton $w={56}><ChangeStyles /><BigLabel>Změnit</BigLabel><BigRow>styly<Down /></BigRow></BigButton>
          </GroupBody>
          <Foot label="Styly" />
        </Group>

        <Group $w={90}>
          <GroupBody $pad="4px 0 0 9px">
            <SmallStack $gap={4}>
              <SmallButton><FindIcon />Najít<Down /></SmallButton>
              <SmallButton><ReplaceIcon />Nahradit</SmallButton>
              <SmallButton><CursorIcon />Vybrat<Down /></SmallButton>
            </SmallStack>
          </GroupBody>
          <Foot label="Úpravy" launcher={false} />
        </Group>
        <RibbonEnd />
      </Ribbon>

      <MessageWrap>
        <MessageBar role="alert">
          <ShieldIcon />
          <MessageTitle>Upozornění zabezpečení</MessageTitle>
          <span>Bylo zakázáno spouštění maker.</span>
          <MessageButton>Povolit obsah</MessageButton>
          <PlainButton aria-label="Zavřít upozornění"><CloseX c="#a48f3c" /></PlainButton>
        </MessageBar>
      </MessageWrap>

      <Workspace>
        <VerticalRuler>
          <TabSelector aria-label="Zarážka tabulátoru">
            <TabFace><svg width="8" height="8" viewBox="0 0 8 8"><path d="M1 0v7h7" fill="none" stroke="#444" strokeWidth="2" /></svg></TabFace>
          </TabSelector>
        </VerticalRuler>
        <DocumentColumn>
          <RulerSpace />
          <Pages>
            <Sheet $tail aria-hidden />
            <Sheet>
              <MainHeading><Numbered><NumberHighlight /><span>Souhrnná technická zpráva</span></Numbered></MainHeading>
              <SubHeading><Numbered><span>B.1</span><span>Popis území stavby</span></Numbered></SubHeading>
              <Clause>a) charakteristika stavebního pozemku</Clause>
              <Body>Pozemek je spíše rovinatý, mírně svažitý směrem jihu. Po celé ploše nedochází k&nbsp;výrazným změnám spádu terénu.&nbsp; Nachází se poblíž centra nedaleko nové zástavby rodinných domů. Je přístupný z místní komunikace obce.</Body>
              <Clause>b) výčet a závěry provedených průzkumů a rozborů (geologický průzkum, hydrogeologický průzkum, stavebně historický průzkum apod.)</Clause>
              <Body>Zde se neřeší – pouze studijní účely.</Body>
              <Clause>c) stávající ochranná a bezpečnostní pásma</Clause>
              <Body $continues>Pozemek není v&nbsp;žádném přírodním chráněném území, památkové rezervaci ani památkové</Body>
            </Sheet>
          </Pages>
        </DocumentColumn>
        <ScrollColumn>
          <SplitHandle />
          <ScrollButton $h={21} $boxed aria-label="Pravítko"><svg width="12" height="12" viewBox="0 0 12 12" fill="none" stroke="#60656c"><path d="M.5 1.500h5v2h6v6H10l-2 2-2-2H.5z" /><path d="M2 2l3 3M5 6l2 2M8 5l-2 4M10 5L8 7" strokeWidth=".8" /></svg></ScrollButton>
          <ScrollButton $h={22} aria-label="Nahoru"><svg width="12" height="6" viewBox="0 0 12 6"><path d="M0 6h12L6 0z" fill="#4a4e55" /></svg></ScrollButton>
          <Track><Thumb><svg width="8" height="8" viewBox="0 0 8 8"><path d="M0 .5h8M0 2.500h8M0 4.500h8M0 6.500h8" stroke="#70757d" /></svg></Thumb></Track>
          <ScrollButton $h={20} aria-label="Dolů"><svg width="12" height="6" viewBox="0 0 12 6"><path d="M0 0h12L6 6z" fill="#4a4e55" /></svg></ScrollButton>
          <ScrollButton $h={21} $rule aria-label="Předchozí stránka"><svg width="6" height="8" viewBox="0 0 6 8"><path d="M0 4h6L3 0zM0 8h6L3 4z" fill="#4a4e55" /></svg></ScrollButton>
          <ScrollButton $h={21} aria-label="Vybrat objekt"><svg width="8" height="8" viewBox="0 0 8 8"><circle cx="4" cy="4" r="3" fill="none" stroke="#60656c" strokeWidth="1.300" /></svg></ScrollButton>
          <ScrollButton $h={22} aria-label="Další stránka"><svg width="6" height="8" viewBox="0 0 6 8"><path d="M0 0h6L3 4zM0 4h6L3 8z" fill="#4a4e55" /></svg></ScrollButton>
        </ScrollColumn>
      </Workspace>

      <StatusBar>
        <StatusCell $w={110}>Stránka: 16 z 40</StatusCell>
        <StatusCell $w={89}>Slova: 8 556</StatusCell>
        <StatusCell $w={97}><ProofIcon />Čeština</StatusCell>
        <StatusCell $w={39}><MacroIcon /></StatusCell>
        <ViewButtons>
          {["Rozložení při tisku", "Čtení", "Web", "Osnova", "Koncept"].map((v, i) => (
            <ViewButton key={v} $on={i === 0} aria-label={v}><ReadView kind={i} /></ViewButton>
          ))}
        </ViewButtons>
        <ZoomArea>
          <ZoomLabel htmlFor="zoom">130 %</ZoomLabel>
          <PlainButton aria-label="Oddálit"><ZoomRound /></PlainButton>
          <ZoomSlider id="zoom" type="range" min="0" max="100" defaultValue="54" />
          <PlainButton aria-label="Přiblížit"><ZoomRound plus /></PlainButton>
        </ZoomArea>
      </StatusBar>

      <Taskbar>
        <StartButton aria-label="Start"><StartOrb /></StartButton>
        <Apps>
          {apps.map((a) => <AppButton key={a.name} $open={a.open} $stack={a.stack} aria-label={a.name}>{a.icon}</AppButton>)}
        </Apps>
        <Tray>
          <Language>CS</Language>
          <TrayButton aria-label="Skryté ikony"><svg width="10" height="5" viewBox="0 0 10 5"><path d="M0 5h10L5 0z" fill="#fff" /></svg></TrayButton>
          <TrayButton aria-label="Baterie"><svg width="19" height="20" viewBox="0 0 19 20"><path d="M1.500 3.500h9v15h-9zM4 3V1h4v2" fill="#e9ecee" fillOpacity=".85" stroke="#fff" strokeWidth="1.500" /><path d="M11 5h7v4q-1 2-3 2v8h-2v-8q-2-1-2-2zM13 5V2M16 5V2" fill="#fff" stroke="#333" strokeWidth=".7" /><path d="M13 5V2M16 5V2" stroke="#fff" strokeWidth="1.300" /></svg></TrayButton>
          <TrayButton aria-label="Síť"><svg width="16" height="14" viewBox="0 0 16 14"><path d="M1 14v-3M4.500 14V9M8 14V6.500M11.500 14V4M15 14V0" stroke="#fff" strokeWidth="2.200" /></svg></TrayButton>
          <TrayButton aria-label="Hlasitost"><svg width="19" height="18" viewBox="0 0 19 18" fill="none" stroke="#fff"><path d="M1 6h3l5-5v16l-5-5H1z" fill="#fff" /><path d="M11.500 6q2 3 0 6M14 4q3.500 5 0 10M16.500 3q4 6 0 12" /></svg></TrayButton>
          <TrayButton aria-label="Centrum akcí"><svg width="18" height="18" viewBox="0 0 18 18"><path d="M1 0v18" stroke="#fff" strokeWidth="1.500" /><path d="M3 2q4-2 8 1v2h6l-3 6q-3 0-4-2-3-2-7 0z" fill="#fff" /></svg></TrayButton>
          <Clock>16:18<br />11.1.2015</Clock>
          <ShowDesktop aria-label="Zobrazit plochu" />
        </Tray>
      </Taskbar>
    </Desktop>
  );
}
